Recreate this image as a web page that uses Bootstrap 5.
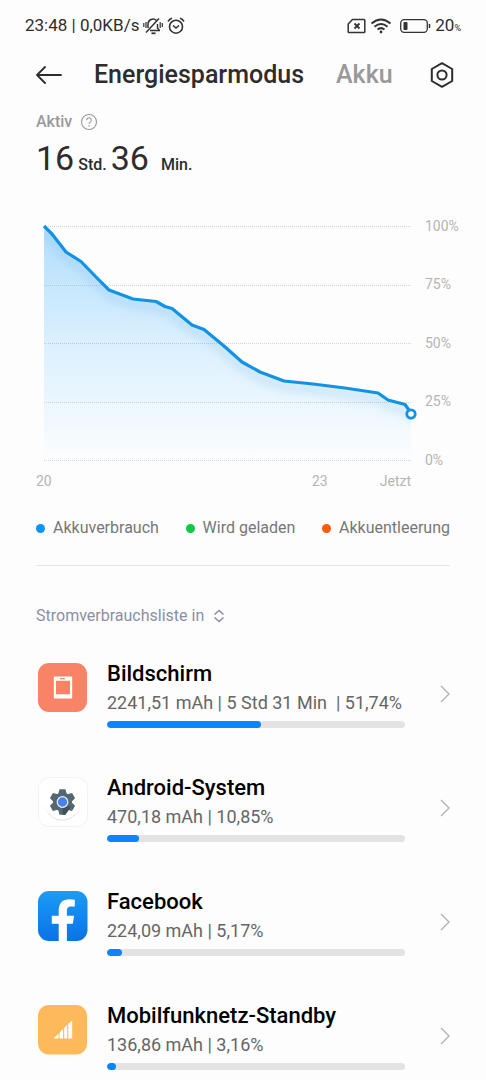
<!DOCTYPE html>
<html lang="de">
<head>
<meta charset="utf-8">
<meta name="viewport" content="width=device-width, initial-scale=1">
<title>Energiesparmodus</title>
<link href="https://cdn.jsdelivr.net/npm/bootstrap@5.3.0/dist/css/bootstrap.min.css" rel="stylesheet">
<style>
  body { font-family: Roboto, "Liberation Sans", sans-serif; color: #2d2d2d; background: #fdfdfd; }
  svg { display: block; flex: none; }
  .status-bar { height: 52px; padding: 0 25px; font-size: 17px; }
  .status-unit { font-size: 9px; padding-top: 6px; }
  .app-bar { height: 46px; padding: 0 32px 0 36px; }
  .tab-btn { font-size: 25px; line-height: 32px; font-weight: 500; color: #999; }
  .tab-btn.active { color: #2d2d2d; }
  .page-pad { padding-left: 36px; padding-right: 36px; }
  .active-label { font-size: 16px; line-height: 20px; font-weight: 500; color: #999; padding-top: 14px; }
  .uptime { line-height: 44px; padding-top: 4px; font-size: 16px; font-weight: 500; }
  .uptime-num { font-size: 34px; font-weight: 400; }
  .chart-box { padding: 27px 26px 0 36px; }
  .chart-box svg { width: 100%; height: auto; }
  .legend-row { font-size: 16px; line-height: 24px; color: #777; padding-top: 24px; padding-bottom: 25px; }
  .legend-dot { width: 9px; height: 9px; border-radius: 50%; }
  .dot-use { background: #0a94f5; }
  .dot-charge { background: #0ec943; }
  .dot-drain { background: #f95b0b; }
  .divider { height: 1px; margin: 0 36px; background: #e6e6e6; }
  .sort-row { padding-top: 38px; padding-bottom: 24px; color: #8a8fa5; }
  .sort-select { appearance: none; border: 0; padding: 0; background: none; color: inherit; font-size: 16px; line-height: 24px; }
  .usage-item { padding: 8px 36px 38px 38px; color: inherit; }
  .usage-item:last-child { padding-bottom: 8px; }
  .usage-body { padding: 0 35px 0 19px; }
  .usage-name { font-size: 22px; line-height: 28px; font-weight: 500; color: #000; }
  .usage-info { font-size: 18px; line-height: 29px; color: #666; white-space: pre; }
  .usage-bar { height: 7px; margin-top: 4px; border-radius: 4px; background: #e3e3e3; }
  .usage-bar .progress-bar { border-radius: 4px; background: #0d84fb; }
  .usage-icon { margin-top: 3px; }
</style>
<script defer src="https://cdn.jsdelivr.net/npm/bootstrap@5.3.0/dist/js/bootstrap.bundle.min.js"></script>
</head>
<body>
<div class="status-bar d-flex align-items-center justify-content-between">
  <div class="d-flex align-items-center">
    <span>23:48 | 0,0KB/s</span>
    <svg class="ms-1" width="20" height="18" viewBox="0 0 20 18" fill="none" stroke="#333" stroke-width="1.500" aria-hidden="true">
      <path d="M5 11V7a5 5 0 0 1 8.500-3.500M7 13.500h10M14.500 7v4l2 2.500M3 15.500 16 1.500"/><path d="M8.500 16.300h4" stroke-width="1.800"/><path d="M.8 6v4M3 5v6M17.200 5v6M19.300 6v4" stroke-width="1.200"/>
    </svg>
    <svg class="ms-1" width="18" height="18" viewBox="0 0 18 18" fill="none" stroke="#333" stroke-width="1.600" aria-hidden="true">
      <circle cx="9" cy="9.700" r="6.500"/><path d="m6 8.500 3 2.500 3-2.500M1 4.500Q2.500 2 5 1.200M17 4.500Q15.500 2 13 1.200"/>
    </svg>
  </div>
  <div class="d-flex align-items-center">
    <svg width="19" height="16" viewBox="0 0 19 16" fill="none" stroke="#333" stroke-width="1.500" aria-hidden="true">
      <path d="M5.500 1.500h11.500q.8 0 .8.800v11.400q0 .8-.8.800H2q-.8 0-.8-.8V6z"/><path d="M7.500 5.500l5 5M12.500 5.500l-5 5" stroke-width="1.800"/>
    </svg>
    <svg class="ms-1" width="22" height="16" viewBox="0 0 22 16" fill="none" stroke="#333" stroke-width="2" aria-hidden="true">
      <path d="M1.500 5.500Q11-2.500 20.500 5.500M4.500 8.700q6.500-5.400 13 0M7.500 11.500q3.500-2.800 7 0"/><circle cx="11" cy="14" r="1.400" fill="#333" stroke="none"/>
    </svg>
    <svg class="ms-2" width="31" height="14" viewBox="0 0 31 14" fill="none" aria-hidden="true">
      <rect x=".7" y=".7" width="26.600" height="12.600" rx="3.500" stroke="#333" stroke-width="1.300"/><rect x="3.500" y="3" width="4" height="8" rx="1" fill="#333"/><path d="M29.500 5v4" stroke="#333" stroke-width="1.500"/>
    </svg>
    <span class="ms-1">20</span><span class="status-unit">%</span>
  </div>
</div>

<header class="app-bar d-flex align-items-center">
  <button class="btn p-0 border-0" aria-label="Zurück">
    <svg width="26" height="18" viewBox="0 0 26 18" fill="none" stroke="#2d2d2d" stroke-width="1.800" stroke-linecap="round" stroke-linejoin="round"><path d="M25 9H1M9 1 1 9l8 8"/></svg>
  </button>
  <nav class="d-flex align-items-center flex-fill">
    <button class="tab-btn active btn p-0 border-0 ms-4 px-2">Energiesparmodus</button>
    <button class="tab-btn btn p-0 border-0 ms-4">Akku</button>
  </nav>
  <button class="btn p-0 border-0" aria-label="Einstellungen">
    <svg width="24" height="26" viewBox="0 0 24 26" fill="none" stroke="#2d2d2d" stroke-width="2" stroke-linejoin="round"><path d="M12 1.200 22.200 7v12L12 24.800 1.800 19V7z"/><circle cx="12" cy="13" r="4.600"/></svg>
  </button>
</header>

<main>
  <section class="page-pad">
    <div class="active-label d-flex align-items-center gap-2">
      <span>Aktiv</span>
      <button class="btn p-0 border-0" aria-label="Hilfe">
        <svg width="18" height="18" viewBox="0 0 18 18" fill="none" stroke="#999" stroke-width="1.100"><circle cx="9" cy="9" r="7.500"/><path d="M6.700 7.200a2.300 2.300 0 1 1 3.700 1.700Q9 9.800 9 11M9 12v1.400"/></svg>
      </button>
    </div>
    <div class="uptime d-flex align-items-baseline">
      <span class="uptime-num">16</span><span class="ms-1">Std.</span>
      <span class="uptime-num ms-1">36</span><span class="ms-2 ps-1">Min.</span>
    </div>
  </section>

  <section class="chart-box">
    <svg viewBox="36 214 424 278" role="img" aria-label="Akkustand im Verlauf">
      <defs>
        <linearGradient id="areaFill" x1="0" y1="226" x2="0" y2="461" gradientUnits="userSpaceOnUse">
          <stop offset="0" stop-color="#b2defd"/><stop offset=".5" stop-color="#dbf0fe"/><stop offset="1" stop-color="#fcfdfe"/>
        </linearGradient>
        <clipPath id="areaClip"><path d="M44 226 52 234 66 252 81 261.500 97 278 109 290 133 299 156 301.500 165 306.500 172 308.500 192 325 204 329.500 224 346 242 362 260 372 284 381 313 384 345 388 378 393 388 400 405 404.500 411 413V461H44z"/></clipPath>
        <filter id="soften" x="-10%" y="-10%" width="120%" height="130%"><feGaussianBlur stdDeviation="4"/></filter>
      </defs>
      <g clip-path="url(#areaClip)">
        <path d="M44 226H411V461H44z" fill="url(#areaFill)"/>
        <path d="M44 232 52 240 66 258 81 267.500 97 284 109 296 133 305 156 307.500 165 312.500 172 314.500 192 331 204 335.500 224 352 242 368 260 378 284 387 313 390 345 394 378 399 388 406 405 410.500 411 419" fill="none" stroke="#65aee0" stroke-opacity=".22" stroke-width="8" filter="url(#soften)"/>
      </g>
      <path d="M44 226.500H411M44 285.500H411M44 343.500H411M44 402.500H411M44 460.500H411" stroke="#7d8a94" stroke-opacity=".35" stroke-dasharray="1 1"/>
      <path d="M44 226 52 234 66 252 81 261.500 97 278 109 290 133 299 156 301.500 165 306.500 172 308.500 192 325 204 329.500 224 346 242 362 260 372 284 381 313 384 345 388 378 393 388 400 405 404.500 411 413" fill="none" stroke="#1292e4" stroke-width="3.200" stroke-linejoin="round"/>
      <circle cx="411" cy="414" r="4.200" fill="#fff" stroke="#1292e4" stroke-width="2.800"/>
      <g fill="#b5b5b5" font-size="14">
        <text x="425" y="231">100%</text><text x="425" y="289">75%</text><text x="425" y="348">50%</text><text x="425" y="406">25%</text><text x="425" y="465">0%</text>
        <text x="36" y="486">20</text><text x="312" y="486">23</text><text x="411" y="486" text-anchor="end">Jetzt</text>
      </g>
    </svg>
  </section>

  <div class="legend-row page-pad d-flex justify-content-between">
    <div class="d-flex align-items-center gap-2"><span class="legend-dot dot-use"></span><span>Akkuverbrauch</span></div>
    <div class="d-flex align-items-center gap-2"><span class="legend-dot dot-charge"></span><span>Wird geladen</span></div>
    <div class="d-flex align-items-center gap-2"><span class="legend-dot dot-drain"></span><span>Akkuentleerung</span></div>
  </div>
  <div class="divider"></div>

  <div class="sort-row page-pad d-flex align-items-center">
    <select class="sort-select" aria-label="Sortierung"><option>Stromverbrauchsliste in</option></select>
    <svg class="ms-2" width="12" height="14" viewBox="0 0 12 14" fill="none" stroke="#8a8fa5" stroke-width="1.600" aria-hidden="true"><path d="M1.500 5.500 6 1.500l4.500 4M1.500 8.500 6 12.500l4.500-4"/></svg>
  </div>

  <div class="usage-list">
    <a href="#" class="usage-item d-flex text-decoration-none">
      <svg class="usage-icon" width="50" height="50" viewBox="0 0 50 50" aria-hidden="true"><rect width="49" height="49" rx="11" fill="#f98366"/><path fill="#fff" fill-rule="evenodd" d="M16.500 13.500h17q.7 0 .7.700v20.600q0 .7-.7.700h-17q-.7 0-.7-.7V14.200q0-.7.7-.7zM18 17.800v13.500h14V17.800z"/><path d="M22 15.700h5" stroke="#f98366" stroke-width="1.200"/></svg>
      <div class="usage-body flex-fill">
        <div class="usage-name">Bildschirm</div>
        <div class="usage-info">2241,51 mAh | 5 Std 31 Min  | 51,74%</div>
        <div class="usage-bar progress"><div class="progress-bar" style="width:51.74%"></div></div>
      </div>
      <svg class="align-self-center" width="10" height="18" viewBox="0 0 10 18" fill="none" stroke="#b0b0b0" stroke-width="1.300" aria-hidden="true"><path d="m1 1 8 8-8 8"/></svg>
    </a>
    <a href="#" class="usage-item d-flex text-decoration-none">
      <svg class="usage-icon" width="50" height="50" viewBox="0 0 50 50" aria-hidden="true">
        <rect x=".5" y=".5" width="49" height="49" rx="11" fill="#fff" stroke="#f2f2f2"/>
        <circle cx="24.500" cy="26" r="17.500" fill="#d5d5d5"/><circle cx="24.500" cy="25" r="17.800" fill="#fff"/>
        <g transform="translate(24.500 25)"><g fill="#546872"><circle r="9.500"/><path id="tooth" d="M-3-12.800H3L4.500-7h-9z"/><use href="#tooth" transform="rotate(60)"/><use href="#tooth" transform="rotate(120)"/><use href="#tooth" transform="rotate(180)"/><use href="#tooth" transform="rotate(240)"/><use href="#tooth" transform="rotate(300)"/></g><path d="M0 5 8 4 7 7 3 12.800H0z" fill="#40515a"/><circle r="5.300" fill="#4a80ee" stroke="#e8f0fb" stroke-width="1.200"/></g>
      </svg>
      <div class="usage-body flex-fill">
        <div class="usage-name">Android-System</div>
        <div class="usage-info">470,18 mAh | 10,85%</div>
        <div class="usage-bar progress"><div class="progress-bar" style="width:10.85%"></div></div>
      </div>
      <svg class="align-self-center" width="10" height="18" viewBox="0 0 10 18" fill="none" stroke="#b0b0b0" stroke-width="1.300" aria-hidden="true"><path d="m1 1 8 8-8 8"/></svg>
    </a>
    <a href="#" class="usage-item d-flex text-decoration-none">
      <svg class="usage-icon" width="50" height="50" viewBox="0 0 50 50" aria-hidden="true">
        <defs><linearGradient id="fbFill" x2="0" y2="1"><stop stop-color="#1b9cf5"/><stop offset="1" stop-color="#0a72e8"/></linearGradient></defs>
        <rect width="49.500" height="50" rx="11" fill="url(#fbFill)"/><path fill="#fff" d="M20.700 50V32.700H13.800V24.700h6.900V19.500C20.700 12 24.800 8.200 31.500 8.200q3 0 5.300.5v6.800h-3.600c-3.300 0-4.300 1.700-4.300 4.200v5h7.200l-1.300 8H28.900V50z"/>
      </svg>
      <div class="usage-body flex-fill">
        <div class="usage-name">Facebook</div>
        <div class="usage-info">224,09 mAh | 5,17%</div>
        <div class="usage-bar progress"><div class="progress-bar" style="width:5.17%"></div></div>
      </div>
      <svg class="align-self-center" width="10" height="18" viewBox="0 0 10 18" fill="none" stroke="#b0b0b0" stroke-width="1.300" aria-hidden="true"><path d="m1 1 8 8-8 8"/></svg>
    </a>
    <a href="#" class="usage-item d-flex text-decoration-none">
      <svg class="usage-icon" width="50" height="50" viewBox="0 0 50 50" aria-hidden="true"><rect width="49" height="49.500" rx="11" fill="#fdb95a"/><path fill="#fff" d="M15.500 33.500 20.500 28.500v5zM21.500 27.500l3.600-3.600v9.600h-3.600zM26.200 22.800l3-3v13.700h-3zM30.300 18.700l3.900-3v17.800h-3.900z"/></svg>
      <div class="usage-body flex-fill">
        <div class="usage-name">Mobilfunknetz-Standby</div>
        <div class="usage-info">136,86 mAh | 3,16%</div>
        <div class="usage-bar progress"><div class="progress-bar" style="width:3.16%"></div></div>
      </div>
      <svg class="align-self-center" width="10" height="18" viewBox="0 0 10 18" fill="none" stroke="#b0b0b0" stroke-width="1.300" aria-hidden="true"><path d="m1 1 8 8-8 8"/></svg>
    </a>
  </div>
</main>
</body>
</html>
